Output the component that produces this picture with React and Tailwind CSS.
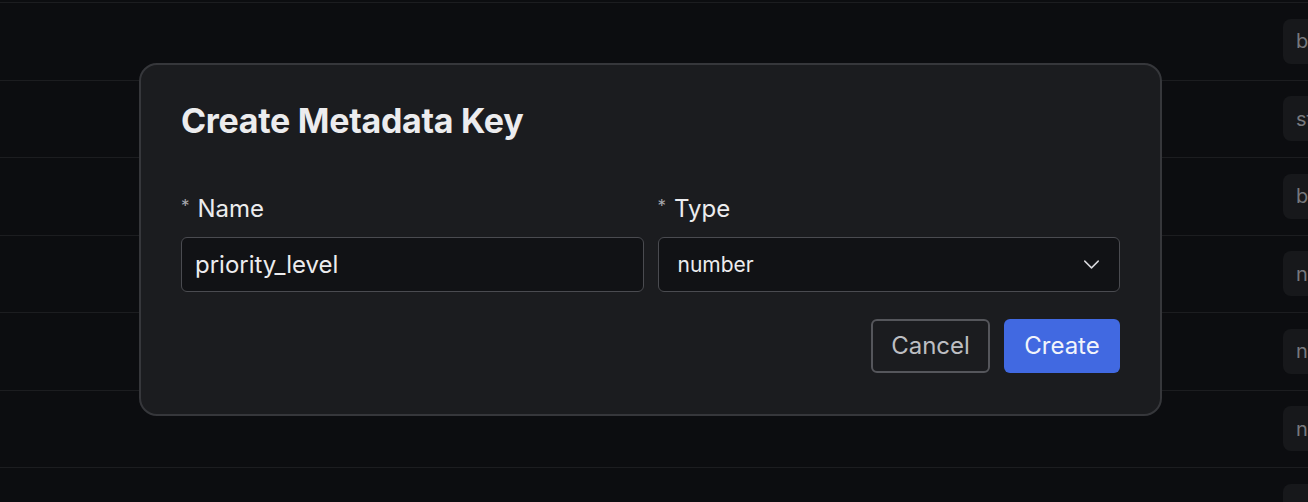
import { ChevronDown } from 'lucide-react'

const rows = ['b', 'st', 'b', 'n', 'n', 'n', 'n']

export default function App() {
  return (
    <div className="relative w-[1308px] h-[502px] overflow-hidden bg-[#0c0d10]" style={{ fontFamily: 'Inter, "Noto Sans", sans-serif' }}>
      {/* table behind the dialog */}
      <div className="flex flex-col">
        <div className="h-[3px] border-b border-[#1c1d20]" />
        {rows.map((r, i) => (
          <div key={i} className="h-[77.5px] border-b border-[#1c1d20] flex items-center justify-end">
            <div className="h-[45px] w-[60px] -mr-[35px] rounded-lg bg-[#17181b] flex items-center pl-[13px] text-[20px] text-[#77787d]">
              {r}
            </div>
          </div>
        ))}
      </div>

      {/* dialog */}
      <div className="absolute left-[139px] top-[63px] w-[1023px] rounded-[18px] border-2 border-[#36373b] bg-[#1b1c1f] px-[40px] pt-[34px] pb-[41px]">
        <h2 className="text-[34px] font-bold leading-[44px] text-[#ececee] tracking-[-0.3px]">Create Metadata Key</h2>
        <div className="mt-[51px] grid grid-cols-2 gap-[14px]">
          <div>
            <label className="flex items-center h-[30px] text-[24px] text-[#ececee]">
              <span className="text-[17px] text-[#a8a9ae] mr-[8px] -mt-[5px]">*</span>Name
            </label>
            <div className="mt-[13px] h-[55px] rounded-md border border-[#4a4b50] bg-[#111215] flex items-center px-[13px] text-[24px] text-[#ececee]">
              priority_level
            </div>
          </div>
          <div>
            <label className="flex items-center h-[30px] text-[24px] text-[#ececee]">
              <span className="text-[17px] text-[#a8a9ae] mr-[8px] -mt-[5px]">*</span>Type
            </label>
            <div className="mt-[13px] h-[55px] rounded-md border border-[#4a4b50] bg-[#111215] flex items-center justify-between pl-[19px] pr-[14px] text-[21px] text-[#ececee]">
              <span>number</span>
              <ChevronDown size={27} strokeWidth={1.3} className="text-[#d8d8dc]" />
            </div>
          </div>
        </div>
        <div className="mt-[27px] flex justify-end gap-[14px]">
          <button className="h-[54px] w-[119px] rounded-md border-2 border-[#55565b] text-[24px] text-[#bdbec2]">Cancel</button>
          <button className="h-[54px] w-[116px] rounded-md bg-[#4169e1] text-[24px] text-[#f2f4fb]">Create</button>
        </div>
      </div>
    </div>
  )
}
